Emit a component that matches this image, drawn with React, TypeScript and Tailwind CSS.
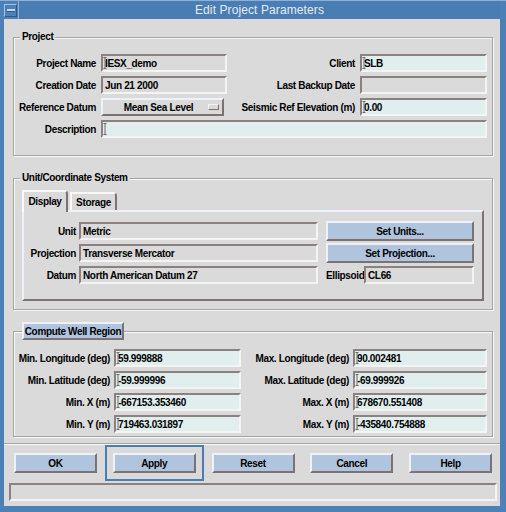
import React from 'react';

const SUNKEN = 'border-2 border-t-[#8c8080] border-l-[#8c8080] border-b-[#f4f4f4] border-r-[#f4f4f4]';
const RAISED = 'border-2 border-t-[#eef2f8] border-l-[#eef2f8] border-b-[#7c7272] border-r-[#7c7272]';
const ETCHED = 'border border-[#a4a4a4] shadow-[inset_1px_1px_0_#f8f8f8,1px_1px_0_#f8f8f8]';

const Cursor: React.FC = () => (
  <svg className="absolute left-[0px] top-[1px]" width="4" height="12" viewBox="0 0 4 12">
    <path d="M0.5 0.5h3M2 0.5v11M0.5 11.5h3" stroke="#6a6a6a" strokeWidth="1" fill="none" />
  </svg>
);

interface FieldProps {
  value?: string;
  w: string;
  edit?: boolean;
  cursor?: boolean;
}

const Field: React.FC<FieldProps> = ({ value = '', w, edit = false, cursor = false }) => (
  <div
    className={`relative h-[18px] shrink-0 ${w} ${edit ? 'bg-[#e0eeee]' : 'bg-[#dadada]'} ${SUNKEN} pl-[2px] flex items-center whitespace-nowrap overflow-hidden`}
  >
    {cursor && <Cursor />}
    {value}
  </div>
);

const Label: React.FC<{ w: string; children: React.ReactNode }> = ({ w, children }) => (
  <div className={`${w} shrink-0 text-right whitespace-nowrap`}>{children}</div>
);

const Button: React.FC<{ w: string; children: React.ReactNode }> = ({ w, children }) => (
  <div className={`${w} h-[20px] shrink-0 bg-[#b0c4de] ${RAISED} flex items-center justify-center whitespace-nowrap`}>
    {children}
  </div>
);

const GroupTitle: React.FC<{ children: React.ReactNode }> = ({ children }) => (
  <div className="-mt-[7px] ml-[6px] w-fit px-[2px] bg-[#dadada] leading-[12px]">{children}</div>
);

export default function App() {
  const bottomButtons = ['OK', 'Apply', 'Reset', 'Cancel', 'Help'];

  return (
    <div className="w-[506px] h-[512px] bg-[#4d80b6] flex flex-col font-['Liberation_Sans',Arial,sans-serif] font-bold text-[10px] tracking-[-0.35px] text-black overflow-hidden">
      {/* title bar */}
      <div className="h-[19px] shrink-0 grid grid-cols-[18px_1fr_6px] border-t border-t-[#8db0d6]">
        <div className="pl-[4px] pt-[3px]">
          <div className="w-[13px] h-[13px] border border-t-[#a9c4e2] border-l-[#a9c4e2] border-b-[#2d5a88] border-r-[#2d5a88] flex items-center justify-center">
            <div className="w-[8px] h-[3px] bg-[#c8d8ea] border-b border-b-[#2d5a88]" />
          </div>
        </div>
        <div className="bg-[#4a7db3] text-center text-[12px] font-normal tracking-[0.1px] leading-[18px] text-[#e6ebf0] border-l border-l-[#8db0d6]">
          Edit Project Parameters
        </div>
        <div />
      </div>

      {/* body */}
      <div className="flex-1 flex pl-[4px] pr-[6px] pb-[6px]">
        <div className="w-[496px] bg-[#dadada] flex flex-col">
          {/* Project */}
          <div className={`mt-[18px] ml-[9px] w-[480px] h-[119px] ${ETCHED}`}>
            <GroupTitle>Project</GroupTitle>
            <div className="mt-[11px] flex flex-col gap-[4px]">
              <div className="flex items-center h-[18px]">
                <Label w="w-[82px]">Project Name</Label>
                <div className="ml-[5px]"><Field w="w-[126px]" value="IESX_demo" cursor /></div>
                <Label w="w-[128px]">Client</Label>
                <div className="ml-[5px]"><Field w="w-[127px]" value="SLB" edit cursor /></div>
              </div>
              <div className="flex items-center h-[18px]">
                <Label w="w-[82px]">Creation Date</Label>
                <div className="ml-[5px]"><Field w="w-[126px]" value="Jun 21 2000" /></div>
                <Label w="w-[128px]">Last Backup Date</Label>
                <div className="ml-[5px]"><Field w="w-[127px]" /></div>
              </div>
              <div className="flex items-center h-[18px]">
                <Label w="w-[82px]">Reference Datum</Label>
                <div className={`ml-[5px] w-[123px] h-[18px] shrink-0 ${RAISED} flex items-center`}>
                  <span className="flex-1 text-center pl-[6px]">Mean Sea Level</span>
                  <div className="w-[11px] h-[6px] mr-[3px] border border-t-[#f4f4f4] border-l-[#f4f4f4] border-b-[#7c7272] border-r-[#7c7272]" />
                </div>
                <Label w="w-[131px]">Seismic Ref Elevation (m)</Label>
                <div className="ml-[5px]"><Field w="w-[127px]" value="0.00" edit cursor /></div>
              </div>
              <div className="flex items-center h-[18px]">
                <Label w="w-[82px]">Description</Label>
                <div className="ml-[5px]"><Field w="w-[386px]" edit cursor /></div>
              </div>
            </div>
          </div>

          {/* Unit/Coordinate System */}
          <div className={`mt-[22px] ml-[9px] w-[480px] h-[132px] ${ETCHED}`}>
            <GroupTitle>Unit/Coordinate System</GroupTitle>
            <div className="mt-[6px] ml-[8px] flex items-end h-[20px]">
              <div className="relative z-10 -mb-[2px] w-[46px] h-[22px] bg-[#dadada] border-2 border-b-0 border-t-[#f8f8f8] border-l-[#f8f8f8] border-r-[#7c7272] rounded-tr-[4px] flex items-center justify-center pb-[2px]">
                Display
              </div>
              <div className="ml-[2px] w-[47px] h-[18px] bg-[#dadada] border-2 border-b-0 border-t-[#f8f8f8] border-l-[#f8f8f8] border-r-[#7c7272] rounded-tr-[4px] flex items-center justify-center">
                Storage
              </div>
            </div>
            <div className={`ml-[8px] w-[462px] h-[91px] ${RAISED} pt-[10px] flex flex-col gap-[4px]`}>
              <div className="flex items-center h-[18px]">
                <Label w="w-[52px]">Unit</Label>
                <div className="ml-[3px]"><Field w="w-[239px]" value="Metric" /></div>
                <div className="ml-[8px]"><Button w="w-[148px]">Set Units...</Button></div>
              </div>
              <div className="flex items-center h-[18px]">
                <Label w="w-[52px]">Projection</Label>
                <div className="ml-[3px]"><Field w="w-[239px]" value="Transverse Mercator" /></div>
                <div className="ml-[8px]"><Button w="w-[148px]">Set Projection...</Button></div>
              </div>
              <div className="flex items-center h-[18px]">
                <Label w="w-[52px]">Datum</Label>
                <div className="ml-[3px]"><Field w="w-[239px]" value="North American Datum 27" /></div>
                <span className="ml-[8px] w-[34px] shrink-0 whitespace-nowrap">Ellipsoid</span>
                <div className="ml-[4px]"><Field w="w-[110px]" value="CL66" /></div>
              </div>
            </div>
          </div>

          {/* Compute Well Region */}
          <div className={`mt-[21px] ml-[9px] w-[480px] h-[106px] ${ETCHED}`}>
            <div className={`-mt-[10px] ml-[8px] w-[102px] h-[18px] bg-[#b0c4de] ${RAISED} flex items-center justify-center whitespace-nowrap`}>
              Compute Well Region
            </div>
            <div className="mt-[9px] flex flex-col gap-[4px]">
              {[
                ['Min. Longitude (deg)', '59.999888', 'Max. Longitude (deg)', '90.002481'],
                ['Min. Latitude (deg)', '-59.999996', 'Max. Latitude (deg)', '-69.999926'],
                ['Min. X (m)', '-667153.353460', 'Max. X (m)', '678670.551408'],
                ['Min. Y (m)', '719463.031897', 'Max. Y (m)', '-435840.754888'],
              ].map(([l1, v1, l2, v2]) => (
                <div key={l1} className="flex items-center h-[18px]">
                  <Label w="w-[96px]">{l1}</Label>
                  <div className="ml-[4px]"><Field w="w-[127px]" value={v1} edit cursor /></div>
                  <Label w="w-[108px]">{l2}</Label>
                  <div className="ml-[4px]"><Field w="w-[134px]" value={v2} edit cursor /></div>
                </div>
              ))}
            </div>
          </div>

          {/* separator */}
          <div className="mt-[6px] h-0 border-t border-t-[#a4a4a4] border-b border-b-[#f8f8f8]" />

          {/* action buttons */}
          <div className="ml-[2px] flex">
            {bottomButtons.map((b) => (
              <div
                key={b}
                className={`w-[99px] h-[36px] flex items-center justify-center ${b === 'Apply' ? 'border-2 border-[#4a7db3]' : ''}`}
              >
                <Button w="w-[83px]">{b}</Button>
              </div>
            ))}
          </div>

          {/* status bar */}
          <div className={`mt-[2px] ml-[5px] w-[488px] h-[18px] ${SUNKEN}`} />
        </div>
      </div>
    </div>
  );
}
